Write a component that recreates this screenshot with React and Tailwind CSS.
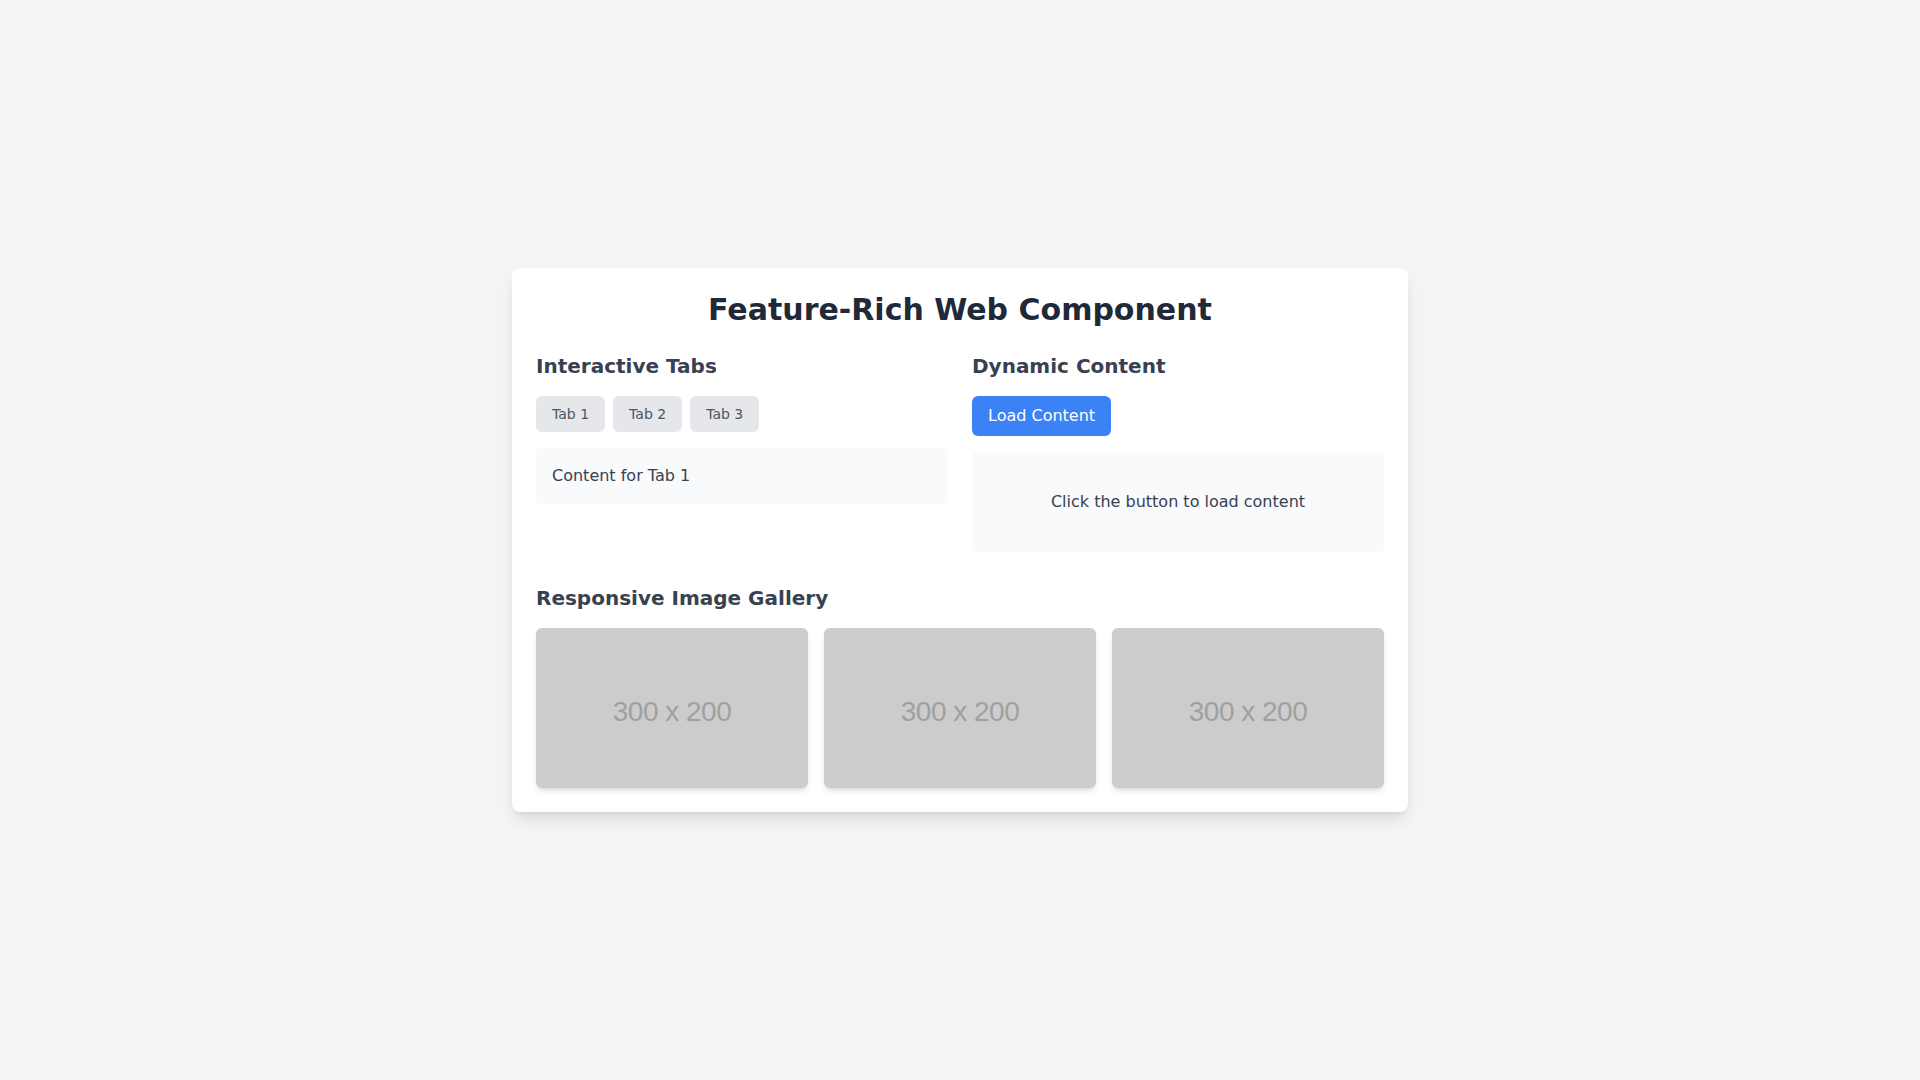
import React, { useState } from "react";

const font = { fontFamily: '"DejaVu Sans", sans-serif' };

function Placeholder() {
  return (
    <div className="h-40 w-full rounded-md bg-[#cccccc] shadow-md flex items-center justify-center overflow-hidden">
      <span
        className="text-[28px] tracking-[-0.5px] text-[#a0a0a0] pt-[8px]"
        style={{ fontFamily: '"Liberation Sans", Arial, sans-serif' }}
      >
        300 x 200
      </span>
    </div>
  );
}

export default function App() {
  const [tab, setTab] = useState(1);
  const [loaded, setLoaded] = useState(false);
  return (
    <div className="min-h-screen bg-[#f3f4f6] flex items-center justify-center" style={font}>
      <div className="w-[896px] bg-white rounded-lg shadow-lg p-6">
        <h1 className="text-3xl font-bold text-[#1f2937] text-center mb-6">Feature-Rich Web Component</h1>
        <div className="grid grid-cols-2 gap-6">
          <div>
            <h2 className="text-xl font-semibold text-[#374151] mb-4">Interactive Tabs</h2>
            <div className="flex gap-2 mb-4">
              {[1, 2, 3].map((t) => (
                <button
                  key={t}
                  onClick={() => setTab(t)}
                  className="px-4 py-2 text-sm rounded-md bg-[#e5e7eb] text-[#4b5563]"
                >
                  Tab {t}
                </button>
              ))}
            </div>
            <div className="bg-[#f9fafb] rounded-md p-4 text-base text-[#374151]">Content for Tab {tab}</div>
          </div>
          <div>
            <h2 className="text-xl font-semibold text-[#374151] mb-4">Dynamic Content</h2>
            <button
              onClick={() => setLoaded(true)}
              className="px-4 py-2 text-base rounded-md bg-[#3b82f6] text-white mb-4"
            >
              Load Content
            </button>
            <div className="bg-[#f9fafb] rounded-md p-4 min-h-[100px] flex items-center justify-center text-base text-[#374151]">
              {loaded ? "Content loaded!" : "Click the button to load content"}
            </div>
          </div>
        </div>
        <h2 className="text-xl font-semibold text-[#374151] mt-8 mb-4">Responsive Image Gallery</h2>
        <div className="grid grid-cols-3 gap-4">
          <Placeholder />
          <Placeholder />
          <Placeholder />
        </div>
      </div>
    </div>
  );
}
